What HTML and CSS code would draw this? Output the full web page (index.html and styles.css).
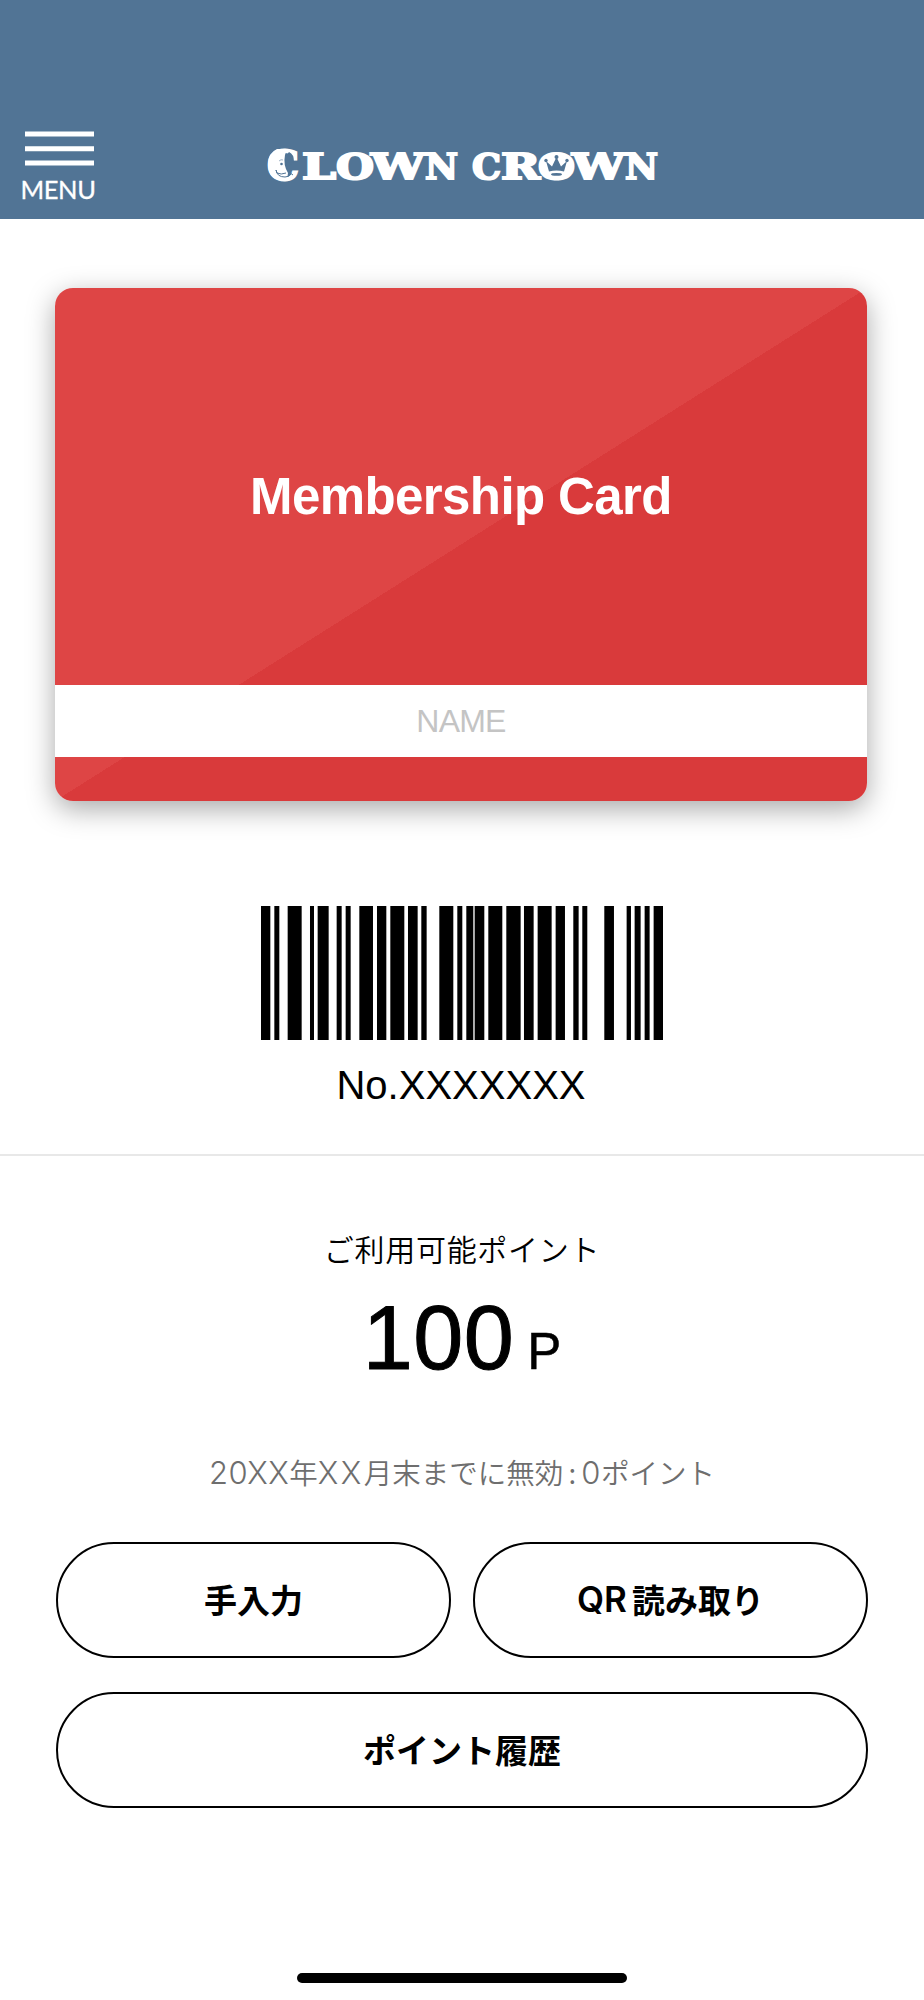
FILE: index.html
```html
<!DOCTYPE html>
<html lang="ja">
<head>
<meta charset="utf-8">
<title>Clown Crown</title>
<link rel="stylesheet" href="styles.css">
</head>
<body>
<header class="header">
  <button class="menu">
    <svg class="menu-icon" width="69" height="36" viewBox="0 0 69 36"><path d="M0 4h69M0 18.700h69M0 33h69" stroke="#fff" stroke-width="5"/></svg>
    <span class="menu-label">MENU</span>
  </button>
  <svg class="logo" width="414" height="60" viewBox="256 134 414 60" role="img">
    <g class="logo-text">
      <text class="logo-cap" x="267" y="179.5" textLength="32" lengthAdjust="spacingAndGlyphs">C</text>
      <text x="302" y="179" textLength="34" lengthAdjust="spacingAndGlyphs">L</text>
      <text x="336" y="179" textLength="38" lengthAdjust="spacingAndGlyphs">O</text>
      <text x="371" y="179" textLength="54" lengthAdjust="spacingAndGlyphs">W</text>
      <text x="425" y="179" textLength="33" lengthAdjust="spacingAndGlyphs">N</text>
      <text x="472" y="179" textLength="29" lengthAdjust="spacingAndGlyphs">C</text>
      <text x="501" y="179" textLength="39" lengthAdjust="spacingAndGlyphs">R</text>
      <text x="538" y="179" textLength="37" lengthAdjust="spacingAndGlyphs">O</text>
      <text x="572" y="179" textLength="53" lengthAdjust="spacingAndGlyphs">W</text>
      <text x="625" y="179" textLength="33" lengthAdjust="spacingAndGlyphs">N</text>
    </g>
    <path d="M277 149q-9 4-9 15 0 13 10 16 5 1 9 0l1-7q-5-8-3-18l2-6z" fill="#fff"/>
    <path d="M289 152q5 2 5 10l-4 3-3 3q-3-12 2-16z" fill="#517495"/>
    <path d="M276 170q1 7 9 7 4 0 6-3M276 170l1 3q4 2 9 0M288 166l5 3-4 3 4 3" fill="none" stroke="#517495" stroke-width="1"/>
    <circle cx="281.500" cy="164" r="1.300" fill="#517495"/>
    <path d="M279 161q2-2 4-1" fill="none" stroke="#8aa2ba" stroke-width=".8"/>
    <ellipse cx="556.500" cy="166" rx="17" ry="13.800" fill="#fff"/>
    <path d="M549 171.500l-3-10.500 6 5.500 4.500-9.500 4.500 9.500 6-5.500-3 10.500q-7.500-2-15 0z" fill="#517495"/>
    <g fill="#517495"><circle cx="546" cy="160.500" r="1.700"/><circle cx="556.500" cy="157" r="2"/><circle cx="567" cy="160.500" r="1.700"/><ellipse cx="556.500" cy="174.400" rx="5.500" ry="1.300"/></g>
  </svg>
</header>

<main>
  <section class="card-area">
    <div class="card">
      <h1 class="card-title">Membership Card</h1>
      <div class="card-name">NAME</div>
    </div>
    <svg class="barcode" viewBox="63 0 1207 402" preserveAspectRatio="none">
      <path d="M63 0h28v402h-28zM103 0h15v402h-15zM143 0h42v402h-42zM210 0h12v402h-12zM233 0h33v402h-33zM290 0h15v402h-15zM317 0h15v402h-15zM358 0h41v402h-41zM411 0h28v402h-28zM451 0h42v402h-42zM504 0h29v402h-29zM544 0h16v402h-16zM598 0h42v402h-42zM652 0h15v402h-15zM679 0h21v402h-21zM704 0h29v402h-29zM745 0h42v402h-42zM799 0h43v402h-43zM852 0h29v402h-29zM893 0h42v402h-42zM947 0h28v402h-28zM1000 0h16v402h-16zM1027 0h15v402h-15zM1093 0h29v402h-29zM1160 0h13v402h-13zM1184 0h18v402h-18zM1214 0h15v402h-15zM1241 0h29v402h-29z"/>
    </svg>
    <p class="card-number">No.XXXXXXX</p>
  </section>

  <section class="points">
    <h2 class="points-label">ご利用可能ポイント</h2>
    <p class="points-value"><span class="amount">100</span><span class="unit">P</span></p>
    <p class="expiry"><span class="latin">20XX</span><span>年</span><span class="latin month">XX</span><span>月末までに無効</span><span class="colon">:</span><span class="latin">0</span><span>ポイント</span></p>
    <div class="actions">
      <button class="button">手入力</button>
      <button class="button"><span class="qr">QR</span>読み取り</button>
      <button class="button wide">ポイント履歴</button>
    </div>
  </section>
</main>
<div class="home-indicator"></div>
</body>
</html>
```

FILE: styles.css
```css
* { box-sizing: border-box; }
body {
  margin: 0;
  height: 2000px;
  display: flex;
  flex-direction: column;
  background: #fff;
  color: #000;
  font-family: "Liberation Sans", "Noto Sans CJK JP", sans-serif;
}
h1, h2, p { margin: 0; }
button { margin: 0; padding: 0; border: 0; background: none; color: inherit; font: inherit; }
main { flex: 1; }

.header {
  height: 219px;
  padding: 130px 0 0 21px;
  display: flex;
  align-items: flex-start;
  background: #517495;
}
.menu { width: 74px; display: flex; flex-direction: column; align-items: center; color: #fff; }
.menu-icon { display: block; margin-left: 2px; }
.menu-label { margin-top: 9px; font: 400 25.500px/28px Lato, sans-serif; letter-spacing: -.4px; -webkit-text-stroke: .3px #fff; white-space: nowrap; }
.logo { margin: 4px 0 0 161px; display: block; overflow: visible; }
.logo-text { font: 700 35px/1 "DejaVu Serif", serif; fill: #fff; stroke: #fff; stroke-width: 2; }
.logo-cap { font-size: 41px; }

.card-area {
  height: 937px;
  padding-top: 69px;
  display: flex;
  flex-direction: column;
  align-items: center;
  border-bottom: 2px solid #e8e8e8;
}
.card {
  width: 812px;
  height: 513px;
  margin-right: 2px;
  padding-top: 179px;
  border-radius: 18px;
  background: linear-gradient(to bottom right, #de4545 50%, #d93a3b 50%);
  box-shadow: 0 8px 28px rgba(0, 0, 0, .34);
  text-align: center;
}
.card-title { font-size: 51px; line-height: 60px; letter-spacing: -.600px; color: #fff; }
.card-name { margin-top: 158px; height: 72px; line-height: 72px; background: #fff; color: #c4c4c4; font-size: 32px; letter-spacing: -.800px; }
.barcode { display: block; width: 402.300px; height: 134px; margin-top: 105px; }
.card-number { margin: 23px 2px 0 0; font-size: 40px; line-height: 44px; }

.points { display: flex; flex-direction: column; align-items: center; padding: 72px 56px 0; }
.points-label { font: 350 30px/40px "Noto Sans CJK JP", sans-serif; letter-spacing: .7px; }
.points-value { display: flex; align-items: baseline; gap: 13px; margin-top: 20px; height: 100px; line-height: 100px; }
.amount { font-size: 90px; letter-spacing: .500px; -webkit-text-stroke: 1px #000; }
.unit { font-size: 51px; -webkit-text-stroke: .5px #000; }
.expiry { display: flex; align-items: baseline; margin-top: 64px; color: #6e6e6e; font: 350 28.500px/40px "Noto Sans CJK JP", sans-serif; white-space: nowrap; }
.latin { font-family: Inter, sans-serif; font-weight: 300; font-size: 31px; letter-spacing: .5px; }
.month { letter-spacing: 2.500px; }
.colon { width: 18px; text-align: center; }
.actions { display: grid; grid-template-columns: 395px 395px; gap: 34px 22px; margin-top: 49px; }
.button {
  display: flex;
  align-items: center;
  justify-content: center;
  height: 116px;
  padding-bottom: 3px;
  border: 2px solid #000;
  border-radius: 58px;
  font: 700 33px/40px "Noto Sans CJK JP", sans-serif;
}
.wide { grid-column: 1 / 3; }
.qr { font: 600 35px/40px Inter, sans-serif; margin-right: 5px; }
.home-indicator { align-self: center; flex: none; width: 330px; height: 10px; margin: 0 0 17px; border-radius: 5px; background: #000; }
```
